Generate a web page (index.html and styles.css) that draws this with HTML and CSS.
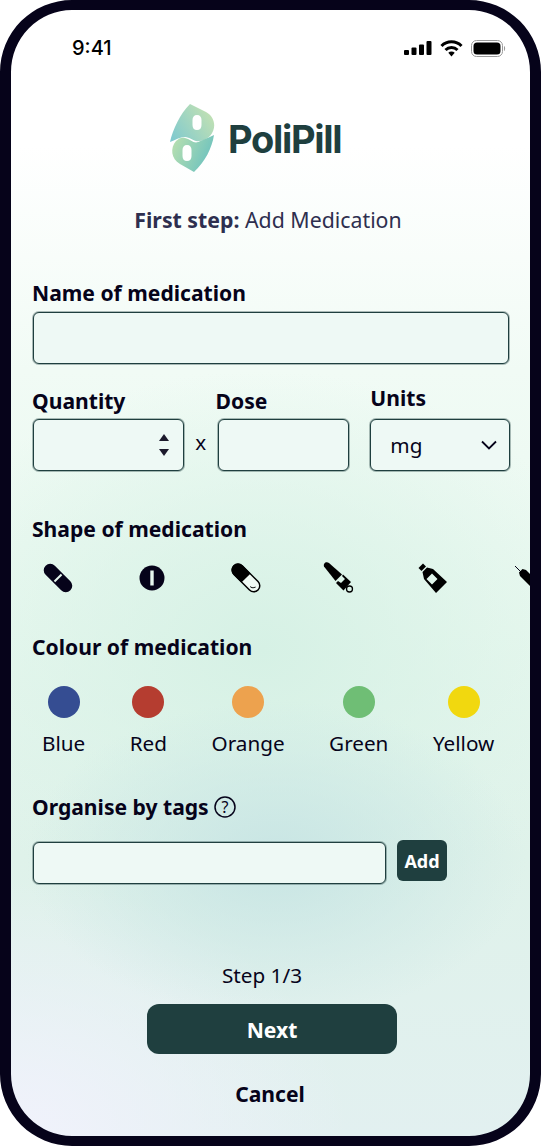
FILE: index.html
```html
<!DOCTYPE html>
<html lang="en">
<head>
  <meta charset="UTF-8" />
  <meta name="viewport" content="width=device-width, initial-scale=1.0"/>
  <title>PoliPill - Add Medication</title>
  <link rel="stylesheet" href="styles.css">
</head>
<body>
  <div class="phone">
    <div class="status-bar">
      <span class="status-time">9:41</span>
      <div class="status-icons">
        <svg width="28" height="14" viewBox="0 0 28 14"><rect x="0" y="9" width="5" height="5" rx="1"/><rect x="7.5" y="6.5" width="5" height="7.5" rx="1"/><rect x="15" y="3.5" width="5" height="10.5" rx="1"/><rect x="22.500" y="0" width="5" height="14" rx="1"/></svg>
        <svg width="23" height="17" viewBox="0 0 23 17"><path d="M1.500 6 A14 14 0 0 1 21.500 6" fill="none" stroke="#000" stroke-width="3"/><path d="M5.500 10 A8.500 8.500 0 0 1 17.500 10" fill="none" stroke="#000" stroke-width="3"/><path d="M8.300 12.800 A4.500 4.500 0 0 1 14.700 12.800 L11.500 16.500 Z"/></svg>
        <svg width="35" height="17" viewBox="0 0 35 17"><rect x="0.500" y="0.500" width="31" height="16" rx="5" fill="none" stroke="#999"/><rect x="2.500" y="2.500" width="27" height="12" rx="3.500"/><path d="M33 6 C34.500 6.500 34.500 10.500 33 11 Z" fill="#999"/></svg>
      </div>
    </div>

    <div class="logo">
      <svg class="logo-mark" width="46" height="68" viewBox="0 0 46 68">
        <defs>
          <linearGradient id="logoTop" x1="0" y1="1" x2="1" y2="0.400"><stop offset="0" stop-color="#7cc8d0"/><stop offset="1" stop-color="#bfe0b4"/></linearGradient>
          <linearGradient id="logoBottom" x1="0" y1="0.300" x2="1" y2="0.700"><stop offset="0" stop-color="#b4deb0"/><stop offset="1" stop-color="#68c0c0"/></linearGradient>
        </defs>
        <path fill="url(#logoTop)" fill-rule="evenodd" d="M20 0 L36 8 C45 13 47 24 40 32 C37 35 33 37 29 37 C24 38 20 33 15 33 C10 33 5 36 0 38 C3 25 10 10 20 0 Z M27 11 C24 11 22.500 13 22.500 16 L22.500 21 C22.500 24 24 26 27 26 C30 26 31.500 24 31.500 21 L31.500 16 C31.500 13 30 11 27 11 Z"/>
        <path fill="url(#logoBottom)" fill-rule="evenodd" d="M44 31 C42 44 35 58 24 68 L10 60 C1 55 0 44 6 37 C9 34 12 33 15 34 C20 35 24 40 28 38 C34 36 39 33 44 31 Z M17 41 C14 41 12.500 43 12.500 46 L12.500 52 C12.500 55 14 57 17 57 C20 57 21.500 55 21.500 52 L21.500 46 C21.500 43 20 41 17 41 Z"/>
      </svg>
      <span class="logo-text">PoliPill</span>
    </div>

    <p class="step-title"><b>First step:</b> Add Medication</p>

    <label class="field-label">Name of medication</label>
    <div class="text-box name-box"></div>

    <div class="dose-row">
      <div class="dose-col qty-col">
        <label class="field-label">Quantity</label>
        <div class="text-box short-box qty-box">
          <span class="spinner"><i class="arrow-up"></i><i class="arrow-down"></i></span>
        </div>
      </div>
      <span class="times">x</span>
      <div class="dose-col dose-amount-col">
        <label class="field-label">Dose</label>
        <div class="text-box short-box"></div>
      </div>
      <div class="dose-col units-col">
        <label class="field-label">Units</label>
        <div class="text-box short-box units-box">
          <span>mg</span>
          <svg width="18" height="10" viewBox="0 0 18 10"><path d="M2 1.500 L9 8.500 L16 1.500" fill="none" stroke="#06031a" stroke-width="1.800"/></svg>
        </div>
      </div>
    </div>

    <label class="field-label shape-label">Shape of medication</label>
    <div class="shape-row">
      <svg width="34" height="34" viewBox="0 0 34 34"><g transform="rotate(45 17 17)"><rect x="-0.500" y="10.500" width="35" height="13" rx="6.500" fill="#06031a"/><rect x="16" y="12" width="2" height="10" fill="#e6f6ee"/></g></svg>
      <svg width="34" height="34" viewBox="0 0 34 34"><circle cx="17" cy="17" r="12.500" fill="#06031a"/><rect x="15.300" y="9.500" width="3.400" height="15" fill="#e6f6ee"/></svg>
      <svg width="34" height="34" viewBox="0 0 34 34"><g transform="rotate(45 17 17)"><rect x="0" y="11" width="34" height="12" rx="6" fill="#f0faf4" stroke="#000" stroke-width="1.500"/><path d="M17 10.500 L5.500 10.500 A6.500 6.500 0 0 0 5.500 23.500 L17 23.500 Z" fill="#000"/><path d="M26 20 A4 4 0 0 0 30 16.500" fill="none" stroke="#000" stroke-width="1"/></g></svg>
      <svg width="34" height="34" viewBox="0 0 34 34"><path d="M1 5.500 C0 2.500 3 0 6 2 L19 13.500 L12.500 20 Z" fill="#000"/><path d="M20 13.500 L28 21 L20.500 29.500 L13 22 L15 20 L18 22 L22 18 L19 15 Z" fill="#000"/><circle cx="26.500" cy="28" r="3" fill="none" stroke="#000" stroke-width="1.300"/></svg>
      <svg width="34" height="34" viewBox="0 0 34 34" fill-rule="evenodd"><path d="M1.500 7 L6 2.500 L9 5.500 L4.500 10 Z" fill="#000"/><path d="M5.500 11 L10 6.500 L16 8 L30 21 L19 32 L7 18 Z M15 12.500 L9.500 18 L15 23.500 L20.500 18 Z" fill="#000"/></svg>
      <svg width="34" height="34" viewBox="0 0 34 34"><path d="M4 5 L10 11" stroke="#06031a" stroke-width="1"/><path d="M8 11.500 L11.500 8 L15 9 L30 24 L24 30 L9 15 Z" fill="#000"/></svg>
    </div>

    <label class="field-label colour-label">Colour of medication</label>
    <div class="colour-row">
      <div class="colour-item"><span class="swatch swatch-blue"></span>Blue</div>
      <div class="colour-item"><span class="swatch swatch-red"></span>Red</div>
      <div class="colour-item"><span class="swatch swatch-orange"></span>Orange</div>
      <div class="colour-item"><span class="swatch swatch-green"></span>Green</div>
      <div class="colour-item"><span class="swatch swatch-yellow"></span>Yellow</div>
    </div>

    <div class="tags-label">
      <label class="field-label">Organise by tags</label>
      <svg width="24" height="24" viewBox="0 0 24 24"><circle cx="12" cy="12" r="10" fill="none" stroke="#06031a" stroke-width="1.500"/><text x="12" y="17.500" text-anchor="middle" class="help-mark">?</text></svg>
    </div>
    <div class="tags-row">
      <div class="text-box tags-box"></div>
      <button class="add-button">Add</button>
    </div>

    <p class="step-count">Step 1/3</p>
    <button class="next-button">Next</button>
    <button class="cancel-button">Cancel</button>
  </div>
</body>
</html>
```
FILE: styles.css
```css
/* General Reset */
* {
  margin: 0;
  padding: 0;
  box-sizing: border-box;
}

body {
  width: 541px;
  height: 1146px;
  background: #ffffff;
  font-family: 'Noto Sans', sans-serif;
  color: #06031a;
  overflow: hidden;
}

.phone {
  width: 541px;
  height: 1146px;
  border-style: solid;
  border-color: #06031a;
  border-width: 10px 11px;
  border-radius: 72px;
  padding: 0 20px 0 21px;
  display: flex;
  flex-direction: column;
  overflow: hidden;
  background:
    radial-gradient(ellipse 250px 160px at 265px 850px, #c8e5e4 0%, rgba(200, 229, 228, 0) 100%),
    radial-gradient(ellipse 340px 260px at 0px 1130px, #f1f2fc 0%, rgba(241, 242, 252, 0) 100%),
    radial-gradient(ellipse 360px 280px at 250px 640px, #d6f1e5 0%, rgba(214, 241, 229, 0) 100%),
    linear-gradient(180deg, #ffffff 0%, #ffffff 12%, #f1fbf5 32%, #e8f8ef 55%, #dff2ea 75%, #e2f0f0 100%);
}

.status-bar {
  display: flex;
  justify-content: space-between;
  align-items: center;
  height: 24px;
  margin-top: 26px;
  padding: 0 4px 0 40px;
}

.status-time {
  font-family: 'Inter', sans-serif;
  font-size: 20px;
  font-weight: 500;
  color: #000;
}

.status-icons {
  display: flex;
  align-items: center;
  gap: 8px;
}

.logo {
  display: flex;
  align-items: center;
  gap: 12px;
  margin: 44px 0 0 138px;
  height: 68px;
}

.logo-mark {
  flex: none;
}

.logo-text {
  font-family: 'Inter', sans-serif;
  font-size: 38px;
  font-weight: 700;
  letter-spacing: -1.3px;
  color: #1f3f3f;
  padding-top: 2px;
}

.step-title {
  font-size: 21.3px;
  line-height: 28px;
  text-align: center;
  color: #2e2f4f;
  margin: 34px 6px 0 0;
}

.field-label {
  display: block;
  font-size: 21.1px;
  font-weight: 700;
  line-height: 28px;
  white-space: nowrap;
  color: #06031a;
}

.step-title + .field-label {
  margin-top: 45px;
}

.text-box {
  background: #eef9f5;
  border: 1px solid #1f3f3f;
  border-radius: 6px;
  box-shadow: 0 0 0 1px rgba(31, 63, 63, 0.35);
}

.name-box {
  height: 52px;
  margin: 5px 1px 0;
}

.dose-row {
  display: flex;
  align-items: flex-end;
  margin-top: 20px;
}

.dose-col {
  display: flex;
  flex-direction: column;
  gap: 4px;
}

.qty-col {
  width: 151px;
  margin-left: 1px;
}

.qty-col .field-label {
  margin-left: -1px;
}

.times {
  width: 34px;
  text-align: center;
  font-size: 20.700px;
  line-height: 52px;
  height: 52px;
  margin-bottom: 3px;
}

.dose-amount-col {
  width: 132px;
}

.dose-amount-col .field-label {
  margin-left: -2px;
}

.units-col {
  width: 140px;
  margin-left: 21px;
}

.units-col .field-label {
  margin-bottom: 3px;
}

.short-box {
  height: 52px;
}

.qty-box {
  display: flex;
  align-items: center;
  justify-content: flex-end;
  padding-right: 14px;
}

.spinner {
  display: flex;
  flex-direction: column;
  gap: 8px;
}

.arrow-up,
.arrow-down {
  display: block;
  width: 0;
  height: 0;
  border-left: 5.5px solid transparent;
  border-right: 5.5px solid transparent;
}

.arrow-up {
  border-bottom: 7px solid #1c1a2c;
}

.arrow-down {
  border-top: 7px solid #1c1a2c;
}

.units-box {
  display: flex;
  align-items: center;
  justify-content: space-between;
  font-size: 20.700px;
  padding: 0 11px 0 19px;
}

.shape-label {
  margin-top: 44px;
}

.shape-row {
  display: flex;
  align-items: center;
  gap: 60px;
  height: 34px;
  margin: 18px -20px 0 9px;
  overflow: hidden;
}

.shape-row svg {
  flex: none;
}

.colour-label {
  margin-top: 38px;
}

.colour-row {
  display: flex;
  gap: 44.500px;
  margin-top: 25px;
  padding-left: 10px;
}

.colour-item {
  display: flex;
  flex-direction: column;
  align-items: center;
  gap: 11px;
  font-size: 20.700px;
  line-height: 28px;
}

.swatch {
  display: block;
  width: 32px;
  height: 32px;
  border-radius: 50%;
}

.swatch-blue { background: #354d92; }
.swatch-red { background: #b53d30; }
.swatch-orange { background: #eda24e; }
.swatch-green { background: #6fbe75; }
.swatch-yellow { background: #f1d80f; }

.tags-label {
  display: flex;
  align-items: center;
  gap: 4px;
  margin-top: 36px;
}

.help-mark {
  font-family: 'Noto Sans', sans-serif;
  font-size: 16px;
  fill: #06031a;
}

.tags-row {
  display: flex;
  align-items: flex-start;
  gap: 11px;
  margin-top: 19px;
}

.tags-box {
  width: 353px;
  height: 42px;
  margin: 2px 1px 0;
}

.add-button {
  width: 50px;
  height: 41px;
  margin-left: -1px;
  background: #1f3f3f;
  color: #ffffff;
  border: none;
  border-radius: 6px;
  font-family: inherit;
  font-size: 18px;
  font-weight: 700;
}

.step-count {
  font-size: 20.700px;
  line-height: 28px;
  text-align: center;
  margin: 77px 18px 0 0;
}

.next-button {
  width: 250px;
  height: 50px;
  align-self: flex-start;
  margin: 15px 0 0 115px;
  background: #1f3f3f;
  color: #ffffff;
  border: none;
  border-radius: 12px;
  font-family: inherit;
  font-size: 21.100px;
  font-weight: 700;
}

.cancel-button {
  background: none;
  border: none;
  font-family: inherit;
  font-size: 21.100px;
  font-weight: 700;
  line-height: 28px;
  color: #06031a;
  margin-top: 26px;
  margin-right: 2px;
}
```
